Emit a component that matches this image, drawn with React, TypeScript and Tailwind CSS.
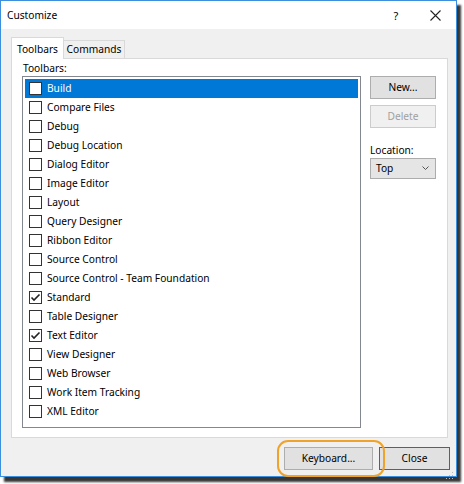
import React from "react";

const ITEMS: { name: string; checked?: boolean }[] = [
  { name: "Build" },
  { name: "Compare Files" },
  { name: "Debug" },
  { name: "Debug Location" },
  { name: "Dialog Editor" },
  { name: "Image Editor" },
  { name: "Layout" },
  { name: "Query Designer" },
  { name: "Ribbon Editor" },
  { name: "Source Control" },
  { name: "Source Control - Team Foundation" },
  { name: "Standard", checked: true },
  { name: "Table Designer" },
  { name: "Text Editor", checked: true },
  { name: "View Designer" },
  { name: "Web Browser" },
  { name: "Work Item Tracking" },
  { name: "XML Editor" },
];

const Check = ({ checked }: { checked?: boolean }) => (
  <span className="w-[13px] h-[13px] border border-[#333333] bg-white flex items-center justify-center shrink-0">
    {checked && (
      <svg width="11" height="11" viewBox="0 0 11 11">
        <path d="M1.5 5.5 L4 8 L9.5 2.5" fill="none" stroke="#222" strokeWidth="1.6" />
      </svg>
    )}
  </span>
);

const Btn = ({ children, disabled, def, className = "" }: { children: React.ReactNode; disabled?: boolean; def?: boolean; className?: string }) => (
  <button
    type="button"
    className={`h-[23px] flex items-center justify-center border ${
      disabled
        ? "bg-[#f0f0f0] border-[#cccccc] text-[#a0a0a0]"
        : def
        ? "bg-[#e1e1e1] border-[#0078d7] text-[#000]"
        : "bg-[#e1e1e1] border-[#adadad] text-[#000]"
    } ${className}`}
  >
    {children}
  </button>
);

export default function App() {
  return (
    <div
      className="w-[464px] h-[484px] bg-white text-[10.2px] text-[#000] leading-none"
      style={{ fontFamily: '"Noto Sans", Lato, sans-serif' }}
    >
      <div className="w-[457px] h-[477px] border border-[#3c8fdc] bg-[#f0f0f0] flex flex-col shadow-[4px_5px_2px_rgba(20,20,20,0.85)]">
        {/* title bar */}
        <div className="h-[28px] bg-white flex items-center pl-[6px] shrink-0">
          <span className="flex-1">Customize</span>
          <span className="w-[20px] text-center text-[11px]">?</span>
          <span className="w-[42px] flex justify-center ml-[8px]">
            <svg width="11" height="11" viewBox="0 0 11 11">
              <path d="M0.5 0.5 L10.5 10.5 M10.5 0.5 L0.5 10.5" stroke="#222" strokeWidth="1.1" />
            </svg>
          </span>
        </div>

        <div className="flex-1 flex flex-col pl-[10px] pt-[8px]">
          {/* tabs */}
          <div className="flex items-end h-[21px] relative z-10">
            <div className="h-[22px] w-[53px] bg-white border border-b-0 border-[#d9d9d9] flex items-center justify-center -mb-px pt-[1px]">
              Toolbars
            </div>
            <div className="h-[18px] w-[61px] bg-[#f0f0f0] border border-l-0 border-b-0 border-[#d9d9d9] flex items-center justify-center">
              Commands
            </div>
          </div>

          {/* tab page */}
          <div className="w-[437px] h-[380px] bg-white border border-[#d9d9d9] flex flex-col pl-[10px] pt-[2px]">
            <div className="h-[14px] pl-[1px] flex items-center">Toolbars:</div>
            <div className="flex gap-[9px] mt-[1px]">
              <div className="w-[339px] h-[352px] border border-[#828790] p-[2px] flex flex-col">
                {ITEMS.map((it, i) => (
                  <div
                    key={it.name}
                    className={`h-[19px] shrink-0 flex items-center gap-[5px] pl-[4px] ${
                      i === 0 ? "bg-[#0078d7] text-white" : ""
                    }`}
                  >
                    <Check checked={it.checked} />
                    <span>{it.name}</span>
                  </div>
                ))}
              </div>
              <div className="w-[66px] flex flex-col">
                <Btn className="w-[66px] h-[21px]">New...</Btn>
                <Btn disabled className="w-[66px] mt-[6px]">Delete</Btn>
                <div className="mt-[15px] h-[14px] flex items-center">Location:</div>
                <div className="mt-[1px] h-[21px] w-[66px] bg-[#e5e5e5] border border-[#acacac] flex items-center pl-[5px] pr-[6px]">
                  <span className="flex-1">Top</span>
                  <svg width="7" height="5" viewBox="0 0 7 5">
                    <path d="M0.5 0.5 L3.5 3.5 L6.5 0.5" fill="none" stroke="#555" strokeWidth="1" />
                  </svg>
                </div>
              </div>
            </div>
          </div>

          {/* bottom buttons */}
          <div className="flex justify-end gap-[6px] pr-[6px] mt-[9px]">
            <div className="relative">
              <Btn className="w-[89px]">Keyboard...</Btn>
              <div className="absolute left-[-7px] top-[-7px] w-[108px] h-[37px] rounded-[11px] border-2 border-[#f0a32a]" />
            </div>
            <Btn def className="w-[71px]">Close</Btn>
          </div>
          <div className="flex justify-end pr-[2px] mt-[2px]">
            <svg width="8" height="8" viewBox="0 0 8 8">
              <rect x="6" y="0" width="1" height="1" fill="#bbb" />
              <rect x="3" y="3" width="1" height="1" fill="#bbb" />
              <rect x="6" y="3" width="1" height="1" fill="#bbb" />
              <rect x="0" y="6" width="1" height="1" fill="#bbb" />
              <rect x="3" y="6" width="1" height="1" fill="#bbb" />
              <rect x="6" y="6" width="1" height="1" fill="#bbb" />
            </svg>
          </div>
        </div>
      </div>
    </div>
  );
}
